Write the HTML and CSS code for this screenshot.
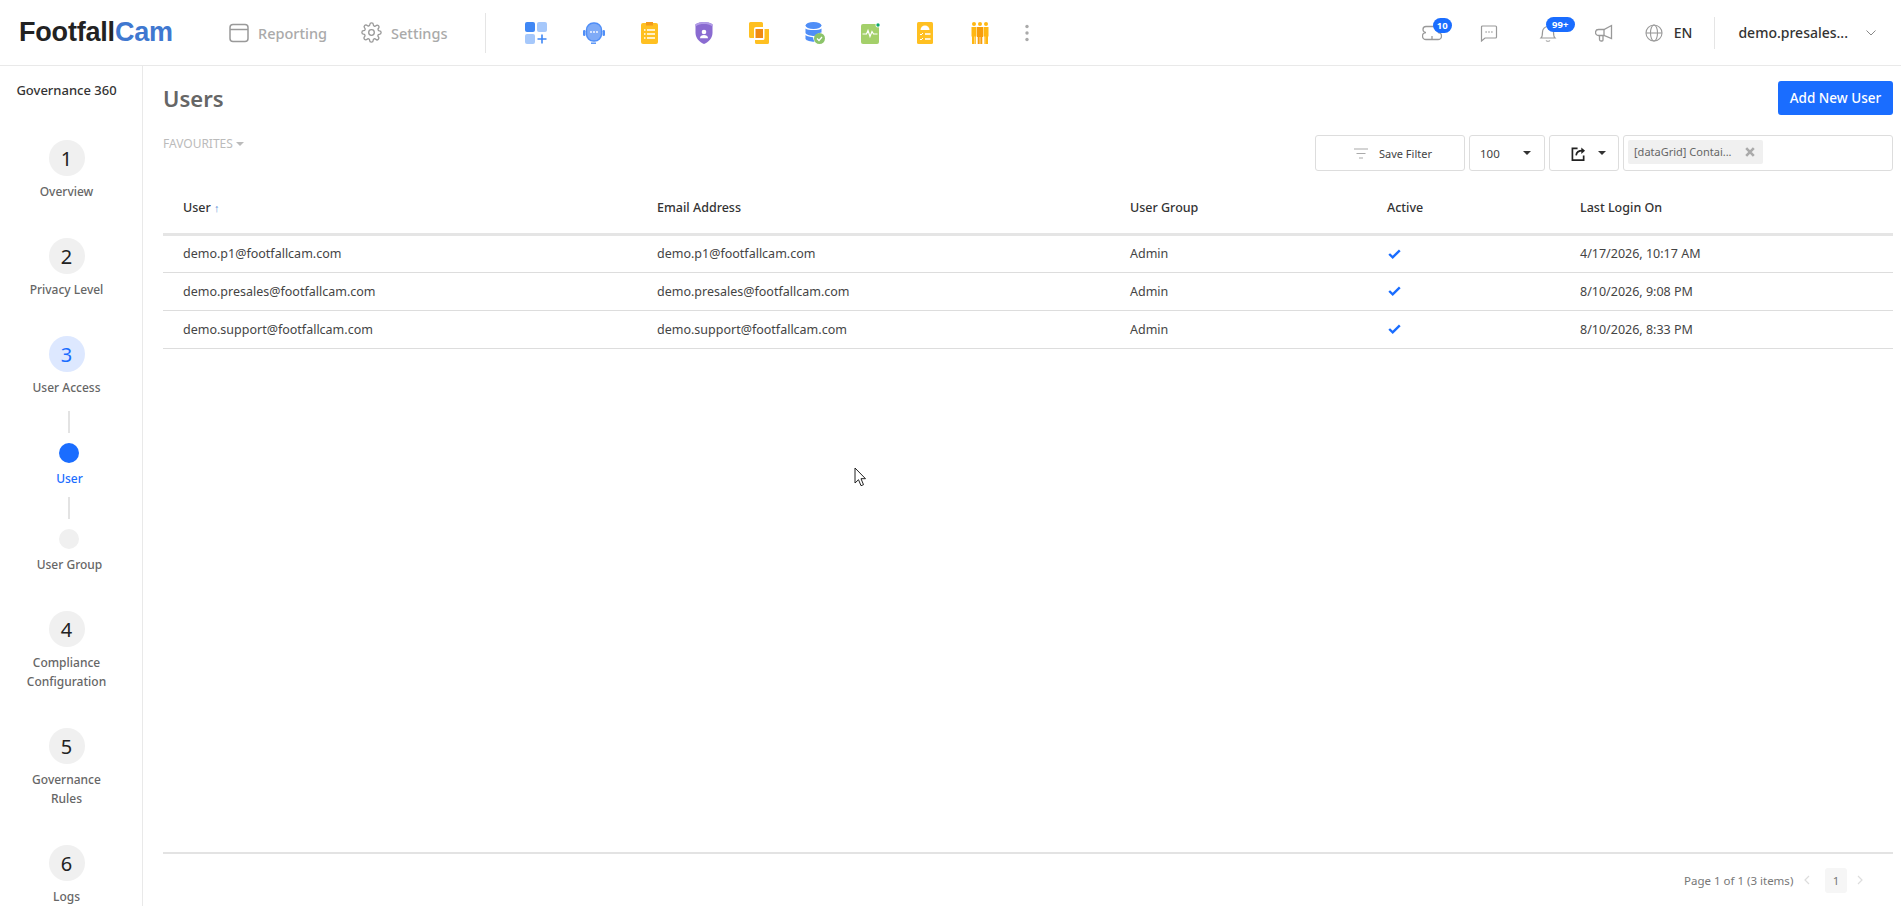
FILE: index.html
```html
<!DOCTYPE html>
<html lang="en">
<head>
<meta charset="utf-8">
<title>Users</title>
<link rel="stylesheet" href="styles.css">
</head>
<body>
<header class="topbar">
  <div class="logo">Footfall<span class="logo-cam">Cam</span></div>
  <nav class="main-nav">
    <a class="nav-link">
      <svg class="nav-ico" viewBox="0 0 20 20" width="20" height="20"><rect x="1" y="1.5" width="18" height="17" rx="3" fill="none" stroke="#999" stroke-width="1.5"/><path d="M1 6.5h18" stroke="#999" stroke-width="1.5"/></svg>
      <span>Reporting</span>
    </a>
    <a class="nav-link">
      <svg class="nav-ico" viewBox="0 0 24 24" width="21" height="21" fill="none" stroke="#999" stroke-width="1.5"><circle cx="12" cy="12" r="3.2"/><path d="M19.4 15a1.7 1.7 0 0 0 .3 1.8l.1.1a2 2 0 1 1-2.900 2.900l-.1-.1a1.700 1.700 0 0 0-2.900 1.200V21a2 2 0 1 1-4 0v-.1a1.700 1.700 0 0 0-2.900-1.200l-.1.1a2 2 0 1 1-2.900-2.900l.1-.1a1.700 1.700 0 0 0-1.200-2.900H3a2 2 0 1 1 0-4h.1a1.700 1.700 0 0 0 1.200-2.900l-.1-.1a2 2 0 1 1 2.900-2.900l.1.1a1.700 1.700 0 0 0 1.800.3h.1a1.700 1.700 0 0 0 1-1.500V3a2 2 0 1 1 4 0v.1a1.700 1.700 0 0 0 2.900 1.200l.1-.1a2 2 0 1 1 2.900 2.900l-.1.1a1.700 1.700 0 0 0-.3 1.800v.1a1.700 1.700 0 0 0 1.500 1H21a2 2 0 1 1 0 4h-.1a1.700 1.700 0 0 0-1.500 1z"/></svg>
      <span>Settings</span>
    </a>
  </nav>
  <div class="vsep nav-sep"></div>
  <div class="apps">
    <svg viewBox="0 0 22 22" width="22" height="22"><rect x="0" y="0" width="10" height="10" rx="2" fill="#3f87f5"/><rect x="12" y="0" width="10" height="10" rx="2" fill="#a6c8fb"/><rect x="0" y="12" width="10" height="10" rx="2" fill="#a6c8fb"/><path d="M17 12.500v9M12.500 17h9" stroke="#3f87f5" stroke-width="1.600"/></svg>
    <svg viewBox="0 0 22 22" width="22" height="22"><rect x="3.500" y="1" width="15" height="18" rx="7" fill="#7fabf7" stroke="#4f8ef7" stroke-width="1.400"/><rect x="0" y="8" width="2.500" height="6" rx="1.200" fill="#4f8ef7"/><rect x="19.500" y="8" width="2.500" height="6" rx="1.200" fill="#4f8ef7"/><path d="M8 21.200h5" stroke="#4f8ef7" stroke-width="1.400"/><circle cx="8" cy="10" r=".9" fill="#fff"/><circle cx="11" cy="10" r=".9" fill="#fff"/><circle cx="14" cy="10" r=".9" fill="#fff"/></svg>
    <svg viewBox="0 0 18 22" width="18" height="22"><rect x="0" y="1" width="17" height="21" rx="2" fill="#ffc021"/><rect x="5" y="0" width="7" height="3.500" fill="#f39a1a"/><path d="M6 8h8M6 12h8M6 16h8M3 8h1.500M3 12h1.500M3 16h1.500" stroke="#fff" stroke-width="1.300"/></svg>
    <svg viewBox="0 0 18 22" width="18" height="22"><path d="M9 0c3 0 6 .8 8.500 2.200v8.800c0 5-4 9-8.500 11C4.500 20 .5 16 .5 11V2.200C3 .8 6 0 9 0z" fill="#8a6bd1"/><path d="M.5 4.500C3 2.600 6 2 9 2s6 .6 8.500 2.500V2.200C15 .8 12 0 9 0S3 .8.5 2.200z" fill="#b19ce6"/><circle cx="9" cy="10" r="2.300" fill="#fff"/><path d="M5 16.200c0-2.200 1.800-3.200 4-3.200s4 1 4 3.200z" fill="#fff"/></svg>
    <svg viewBox="0 0 20 22" width="20" height="22"><path d="M1.500 0h11A1.500 1.500 0 0 1 14 1.500V5H7a2 2 0 0 0-2 2v9H1.500A1.500 1.500 0 0 1 0 14.500v-13A1.500 1.500 0 0 1 1.500 0z" fill="#ffc021"/><path d="M15.500 7H20v13.500a1.500 1.500 0 0 1-1.500 1.500h-11A1.500 1.500 0 0 1 6 20.500V18h8a1.500 1.500 0 0 0 1.500-1.500z" fill="#ffc021"/><rect x="6.500" y="7" width="7.500" height="9" fill="#f08a12"/></svg>
    <svg viewBox="0 0 20 22" width="20" height="22"><ellipse cx="8.500" cy="3.500" rx="8" ry="3.500" fill="#4f8ef7"/><path d="M.5 6.500c2 2 14 2 16 0v4c-3 .5-6 2-7 3.500-4 0-8-1-9-3z" fill="#4f8ef7"/><path d="M.5 13c1.500 1.500 5 2 7.500 2.300.2 1.500.6 3 1.500 4.400-4 0-8-1-9-2.700z" fill="#4f8ef7"/><circle cx="14.500" cy="16.500" r="5.500" fill="#8cc46a"/><path d="M12 16.500l2 2 3-3.500" fill="none" stroke="#fff" stroke-width="1.200"/></svg>
    <svg viewBox="0 0 20 22" width="20" height="22"><rect x="0" y="2" width="18" height="20" rx="2" fill="#a4d06a"/><path d="M1.500 12h4l1.500-3.500 2 6 2-5 1.500 2.500h4" fill="none" stroke="#fff" stroke-width="1.200"/><circle cx="17" cy="3" r="2.500" fill="#fff"/><circle cx="17" cy="3" r="1.700" fill="#0fa76a"/></svg>
    <svg viewBox="0 0 18 22" width="18" height="22"><rect x="0" y="0" width="16" height="22" rx="1.500" fill="#ffc021"/><path d="M3.500 8a4.500 4.500 0 0 1 9 0z" fill="#fff"/><path d="M3 12l1 1 2-2M3 17l1 1 2-2" fill="none" stroke="#fff" stroke-width="1"/><path d="M8 12h5.500M8 17h5.500" stroke="#fff" stroke-width="1.300"/></svg>
    <svg viewBox="0 0 18 22" width="18" height="22"><g fill="#ffb712"><circle cx="3" cy="2" r="2"/><circle cx="9" cy="2" r="2"/><circle cx="15" cy="2" r="2"/><path d="M.5 5h5v9.500H5V22H4.200v-7.500h-.6V22H1v-7.500H.5z"/><path d="M12.500 5h5v9.500H17V22h-2.800v-7.500h-.6V22H13v-7.500h-.5z"/></g><path d="M6 5h6v10h-.7v7H9.300v-7h-.6v7H6.700v-7H6z" fill="#f79d0c"/></svg>
    <svg class="kebab" viewBox="0 0 4 18" width="4" height="18"><circle cx="2" cy="2.500" r="1.700" fill="#aaa"/><circle cx="2" cy="9" r="1.700" fill="#aaa"/><circle cx="2" cy="15.500" r="1.700" fill="#aaa"/></svg>
  </div>
  <div class="top-right">
    <div class="tool tool-chat">
      <svg viewBox="0 0 20 18" width="20" height="18" fill="none" stroke="#999" stroke-width="1.300"><path d="M4 2.500h12a3 3 0 0 1 0 6 3 3 0 0 1 0 7H4a3 3 0 0 1 0-7 3 3 0 0 1 0-6z"/><path d="M10 12v3.500"/></svg>
      <span class="badge badge-10">10</span>
    </div>
    <div class="tool tool-msg">
      <svg viewBox="0 0 18 18" width="18" height="18" fill="none" stroke="#999" stroke-width="1.200"><path d="M2.500 2h13a1 1 0 0 1 1 1v10a1 1 0 0 1-1 1H5l-3.500 3V3a1 1 0 0 1 1-1z"/><path d="M5.500 8h1.200M8.400 8h1.200M11.300 8h1.200" stroke-width="1.400"/></svg>
    </div>
    <div class="tool tool-bell">
      <svg viewBox="0 0 18 20" width="18" height="20" fill="none" stroke="#999" stroke-width="1.200"><path d="M2 15c1.500-1.500 1.500-3 1.500-6a5.500 5.500 0 0 1 11 0c0 3 0 4.500 1.500 6z"/><path d="M7 17.500c.8 1 3.200 1 4 0"/></svg>
      <span class="badge badge-99">99+</span>
    </div>
    <div class="tool tool-mega">
      <svg viewBox="0 0 18 18" width="18" height="18" fill="none" stroke="#999" stroke-width="1.300"><path d="M16.500 1.500v13L9 11.500H3.500a2.500 2.500 0 0 1 0-6H9z"/><path d="M9 5.500v6M4.500 11.500v4a1.500 1.500 0 0 0 1.500 1.500h1a1 1 0 0 0 1-1v-4.500"/></svg>
    </div>
    <div class="tool tool-globe">
      <svg viewBox="0 0 18 18" width="18" height="18" fill="none" stroke="#999" stroke-width="1.100"><circle cx="9" cy="9" r="8"/><ellipse cx="9" cy="9" rx="3.500" ry="8"/><path d="M1 9h16"/></svg>
      <span class="lang">EN</span>
    </div>
    <div class="vsep user-sep"></div>
    <span class="username">demo.presales...</span>
    <svg class="user-chev" viewBox="0 0 10 6" width="10" height="6" fill="none" stroke="#888" stroke-width="1"><path d="M.5.500 5 5 9.500.500"/></svg>
  </div>
</header>
<div class="shell">
  <aside class="sidebar">
    <div class="side-title">Governance 360</div>
    <div class="circle">1</div><div class="side-label">Overview</div>
    <div class="circle">2</div><div class="side-label">Privacy Level</div>
    <div class="circle circle-on">3</div><div class="side-label">User Access</div>
    <div class="sub">
      <div class="sub-line"></div>
      <div class="sub-dot sub-dot-on"></div>
      <div class="side-label sub-label sub-label-on">User</div>
      <div class="sub-line sub-line-2"></div>
      <div class="sub-dot"></div>
      <div class="side-label sub-label">User Group</div>
    </div>
    <div class="circle">4</div><div class="side-label">Compliance<br>Configuration</div>
    <div class="circle">5</div><div class="side-label">Governance<br>Rules</div>
    <div class="circle">6</div><div class="side-label">Logs</div>
  </aside>
  <main class="main">
    <div class="title-row">
      <h1 class="page-title">Users</h1>
      <button class="btn-add">Add New User</button>
    </div>
    <div class="tool-row">
      <div class="favs">FAVOURITES <span class="favs-caret"></span></div>
      <div class="filters">
        <div class="box box-save">
          <svg viewBox="0 0 14 11" width="14" height="11" fill="none" stroke="#aaa" stroke-width="1.200"><path d="M0 1h14M2.500 5.500h9M5 10h4"/></svg>
          <span>Save Filter</span>
        </div>
        <div class="box box-size"><span>100</span><span class="caret"></span></div>
        <div class="box box-export">
          <svg viewBox="0 0 16 16" width="15" height="15" fill="none" stroke="#222" stroke-width="1.800"><path d="M7 2.500H1.500v12.500h12V10"/><path d="M5.500 10c.3-3.500 3-5 7-5"/><path d="M11 1.500 15 5l-4 3.500z" fill="#222" stroke="none"/></svg>
          <span class="caret"></span>
        </div>
        <div class="box box-tags">
          <div class="tag"><span>[dataGrid] Contai...</span>
            <svg viewBox="0 0 10 10" width="10" height="10"><path d="M1.200 1.200l7.600 7.600M8.800 1.200 1.200 8.800" stroke="#aaa" stroke-width="2.600"/></svg>
          </div>
        </div>
      </div>
    </div>
    <table class="grid">
      <colgroup><col class="c1"><col class="c2"><col class="c3"><col class="c4"><col class="c5"></colgroup>
      <thead>
        <tr><th>User <span class="sort">↑</span></th><th>Email Address</th><th>User Group</th><th>Active</th><th>Last Login On</th></tr>
      </thead>
      <tbody>
        <tr><td>demo.p1@footfallcam.com</td><td>demo.p1@footfallcam.com</td><td>Admin</td><td><svg class="check" viewBox="0 0 13 10" width="13" height="10"><path d="M1.200 5l3.500 3.300L11.800 1.300" fill="none" stroke="#1a6dff" stroke-width="2.400"/></svg></td><td>4/17/2026, 10:17 AM</td></tr>
        <tr><td>demo.presales@footfallcam.com</td><td>demo.presales@footfallcam.com</td><td>Admin</td><td><svg class="check" viewBox="0 0 13 10" width="13" height="10"><path d="M1.200 5l3.500 3.300L11.800 1.300" fill="none" stroke="#1a6dff" stroke-width="2.400"/></svg></td><td>8/10/2026, 9:08 PM</td></tr>
        <tr><td>demo.support@footfallcam.com</td><td>demo.support@footfallcam.com</td><td>Admin</td><td><svg class="check" viewBox="0 0 13 10" width="13" height="10"><path d="M1.200 5l3.500 3.300L11.800 1.300" fill="none" stroke="#1a6dff" stroke-width="2.400"/></svg></td><td>8/10/2026, 8:33 PM</td></tr>
      </tbody>
    </table>
    <footer class="pager">
      <span class="pager-text">Page 1 of 1 (3 items)</span>
      <svg class="pg-prev" viewBox="0 0 6 10" width="6" height="10" fill="none" stroke="#ddd" stroke-width="1.200"><path d="M5 1 1 5l4 4"/></svg>
      <span class="pg-num">1</span>
      <svg class="pg-next" viewBox="0 0 6 10" width="6" height="10" fill="none" stroke="#ddd" stroke-width="1.200"><path d="M1 1l4 4-4 4"/></svg>
    </footer>
  </main>
</div>
<svg class="cursor" viewBox="0 0 13 20" width="13" height="20"><path d="M1 1v15l3.500-3.300 2.500 6 2.500-1-2.500-6H11.500z" fill="#fff" stroke="#222" stroke-width="1"/></svg>
</body>
</html>
```
FILE: styles.css
```css
* { box-sizing: border-box; }
html, body { margin: 0; padding: 0; height: 100%; }
body {
  width: 1901px; height: 906px; overflow: hidden; position: relative;
  background: #fff; color: #333;
  font-family: "Noto Sans", "Open Sans", sans-serif; font-size: 13px;
  display: flex; flex-direction: column;
}
.topbar {
  height: 66px; flex: none; display: flex; align-items: center;
  border-bottom: 1px solid #e9e9e9; padding-left: 19px;
}
.logo {
  width: 210px; font-family: "Liberation Sans", sans-serif; font-weight: 700;
  font-size: 27px; color: #222; letter-spacing: -.2px;
}
.logo-cam { color: #3f78d0; }
.main-nav { display: flex; align-items: center; gap: 34px; }
.nav-link { display: flex; align-items: center; gap: 9px; color: #aaa; font-size: 14.500px; font-weight: 500; }
.vsep { width: 1px; background: #e5e5e5; flex: none; }
.nav-sep { height: 40px; margin-left: 38px; }
.apps { display: flex; align-items: center; margin-left: 39px; width: 582px; }
.apps svg { flex: none; margin-right: 36px; }
.apps .kebab { margin-left: 0; }
.top-right { display: flex; align-items: center; height: 100%; margin-left: auto; }
.tool { position: relative; display: flex; align-items: center; }
.tool-chat { margin-left: 0; }
.tool-msg { margin-left: 38px; }
.tool-bell { margin-left: 41px; }
.tool-mega { margin-left: 38px; }
.tool-globe { margin-left: 32px; gap: 11px; }
.lang { font-size: 14px; font-weight: 500; color: #333; }
.badge {
  position: absolute; top: -6px; height: 15px; border-radius: 8px;
  background: #1a6dff; color: #fff; font-size: 9.500px; font-weight: 700;
  line-height: 15px; text-align: center;
}
.badge-10 { left: 11px; width: 19px; }
.badge-99 { left: 7px; width: 29px; }
.user-sep { height: 32px; margin-left: 22px; }
.username { margin-left: 23px; font-size: 14px; font-weight: 500; color: #333; }
.user-chev { margin: 0 25px 0 18px; }
.shell { flex: 1; display: flex; min-height: 0; }
.sidebar {
  width: 143px; flex: none; padding-right: 9px; padding-top: 15px;
  border-right: 1px solid #e9e9e9; display: flex; flex-direction: column; align-items: center;
  text-align: center; overflow: hidden;
}
.side-title { font-size: 13px; font-weight: 500; line-height: 19px; color: #333; margin-bottom: 40px; }
.circle {
  width: 36px; height: 36px; border-radius: 50%; background: #f0f0f0; flex: none;
  display: flex; align-items: center; justify-content: center;
  font-size: 20px; color: #222; margin-bottom: 6px;
}
.circle-on { background: #dde8ff; color: #1a6dff; }
.side-label { font-size: 12px; font-weight: 500; line-height: 19px; color: #666; margin-bottom: 37px; white-space: nowrap; flex: none; }
.sub { display: flex; flex-direction: column; align-items: center; margin-top: -23px; padding-left: 6px; flex: none; }
.sub-line { width: 2px; height: 22px; background: #e3e3e3; margin-bottom: 10px; }
.sub-line-2 { margin-top: 0; }
.sub-dot { width: 20px; height: 20px; border-radius: 50%; background: #f0f0f0; }
.sub-dot-on { background: #1a6dff; }
.sub-label { margin: 6px 0 9px; }
.sub-label-on { color: #1a6dff; }
.sub .side-label:last-child { margin-bottom: 37px; }
.main { flex: 1; min-width: 0; display: flex; flex-direction: column; padding: 0 8px 0 20px; }
.title-row { display: flex; justify-content: space-between; align-items: center; margin-top: 15px; height: 34px; }
.page-title { margin: 0; font-size: 22px; font-weight: 600; color: #666; }
.btn-add {
  width: 115px; height: 34px; border: 0; border-radius: 3px; background: #1a6dff; color: #fff;
  font: 500 13.500px "Noto Sans", sans-serif; padding: 0;
}
.tool-row { display: flex; justify-content: space-between; margin-top: 20px; height: 36px; }
.favs { font-size: 12px; color: #bbb; line-height: 18px; }
.favs-caret {
  display: inline-block; vertical-align: 2px; border: 4.500px solid transparent; border-top-color: #bbb; border-bottom: 0;
}
.filters { display: flex; gap: 4px; }
.box {
  height: 36px; border: 1px solid #ddd; border-radius: 3px; display: flex; align-items: center;
  font-size: 11.500px; color: #444;
}
.box-save { width: 150px; padding-left: 38px; gap: 11px; font-size: 11px; }
.box-size { width: 76px; padding: 0 13px 0 10px; justify-content: space-between; }
.box-export { width: 70px; padding-left: 21px; gap: 12px; }
.box-tags { width: 270px; padding-left: 4px; }
.caret { border: 4px solid transparent; border-top-color: #333; border-bottom: 0; }
.tag {
  width: 135px; height: 24px; background: #f0f0f0; display: flex; align-items: center;
  justify-content: space-between; padding: 0 8px 0 6px; font-size: 11px; color: #666; border-radius: 2px;
  margin-bottom: 3px;
}
.grid { table-layout: fixed; width: 100%; border-collapse: collapse; margin-top: 12px; flex: none; }
.c1 { width: 474px; } .c2 { width: 473px; } .c3 { width: 257px; } .c4 { width: 193px; } .c5 { width: 333px; }
.grid th {
  height: 51px; text-align: left; padding: 0 0 0 20px; font-size: 12.500px; font-weight: 500; color: #333;
  border-bottom: 3px solid #e5e5e5;
}
.grid td { height: 38px; padding: 0 0 0 20px; font-size: 12.500px; color: #444; border-bottom: 1px solid #ddd; }
.sort { color: #5a8fd8; font-weight: 400; font-size: 11px; }
.check { display: block; margin-left: 1px; }
.pager {
  margin-top: auto; height: 54px; flex: none; border-top: 2px solid #e3e3e3; display: flex;
  align-items: center; padding-left: 1521px; color: #777; font-size: 11.500px;
}
.pager-text { width: 120px; white-space: nowrap; }
.pg-prev { margin-left: 0; }
.pg-num {
  width: 22px; height: 25px; margin-left: 15px; background: #f6f6f6; border-radius: 3px; color: #777;
  display: flex; align-items: center; justify-content: center;
}
.pg-next { margin-left: 10px; }
.cursor { position: absolute; left: 854px; top: 467px; }
```
